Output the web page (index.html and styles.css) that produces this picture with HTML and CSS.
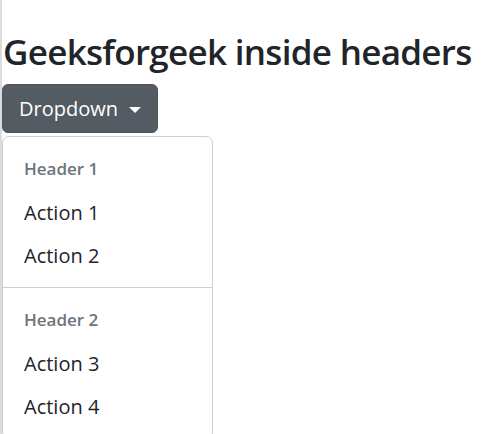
FILE: index.html
```html
<!DOCTYPE html>
<html lang="en">
<head>
<meta charset="utf-8">
<title>Dropdown headers</title>
<link rel="stylesheet" href="styles.css">
</head>
<body>
<h1 class="title">Geeksforgeek inside headers</h1>
<div class="dropdown">
  <button class="btn-toggle" type="button">Dropdown <span class="caret"></span></button>
  <ul class="menu">
    <li><h6 class="menu-header">Header 1</h6></li>
    <li><a class="menu-item" href="#">Action 1</a></li>
    <li><a class="menu-item" href="#">Action 2</a></li>
    <li><hr class="menu-divider"></li>
    <li><h6 class="menu-header">Header 2</h6></li>
    <li><a class="menu-item" href="#">Action 3</a></li>
    <li><a class="menu-item" href="#">Action 4</a></li>
  </ul>
</div>
</body>
</html>
```

FILE: styles.css
```css
html, body {
  margin: 0;
  padding: 0;
  overflow: hidden;
  height: 100%;
}
body {
  background: #fff;
  border-left: 2px solid #dcdcdc;
  font-family: "Open Sans", "Noto Sans", sans-serif;
  color: #212529;
  box-sizing: border-box;
}
.title {
  margin: 30px 0 11px 1px;
  font-size: 35px;
  font-weight: 600;
  line-height: 43px;
  letter-spacing: -0.7px;
  color: #212529;
}
.dropdown {
  display: flex;
  flex-direction: column;
  align-items: flex-start;
}
.btn-toggle {
  display: inline-flex;
  align-items: center;
  height: 49px;
  padding: 0 16px 0 16px;
  background: #545b62;
  color: #fff;
  border: 1px solid #4e555b;
  border-radius: 6px;
  font-family: inherit;
  font-size: 20px;
  line-height: 30px;
}
.caret {
  display: inline-block;
  margin-left: 11px;
  width: 0;
  height: 0;
  border-top: 6px solid #fff;
  border-left: 6px solid transparent;
  border-right: 6px solid transparent;
  margin-top: 2px;
}
.menu {
  list-style: none;
  margin: 3px 0 0 0;
  padding: 10px 0;
  width: 211px;
  box-sizing: border-box;
  border: 1px solid #cfcfcf;
  border-radius: 7px;
  background: #fff;
}
.menu-header {
  margin: 0;
  padding: 9px 21px 9px;
  font-size: 17px;
  font-weight: 600;
  line-height: 26px;
  color: #6c757d;
}
.menu-item {
  display: block;
  padding: 6.5px 21px;
  font-size: 20px;
  line-height: 30px;
  color: #212529;
  text-decoration: none;
}
.menu-divider {
  margin: 10px 0;
  border: 0;
  border-top: 1px solid #cfcfcf;
  height: 0;
}
```
